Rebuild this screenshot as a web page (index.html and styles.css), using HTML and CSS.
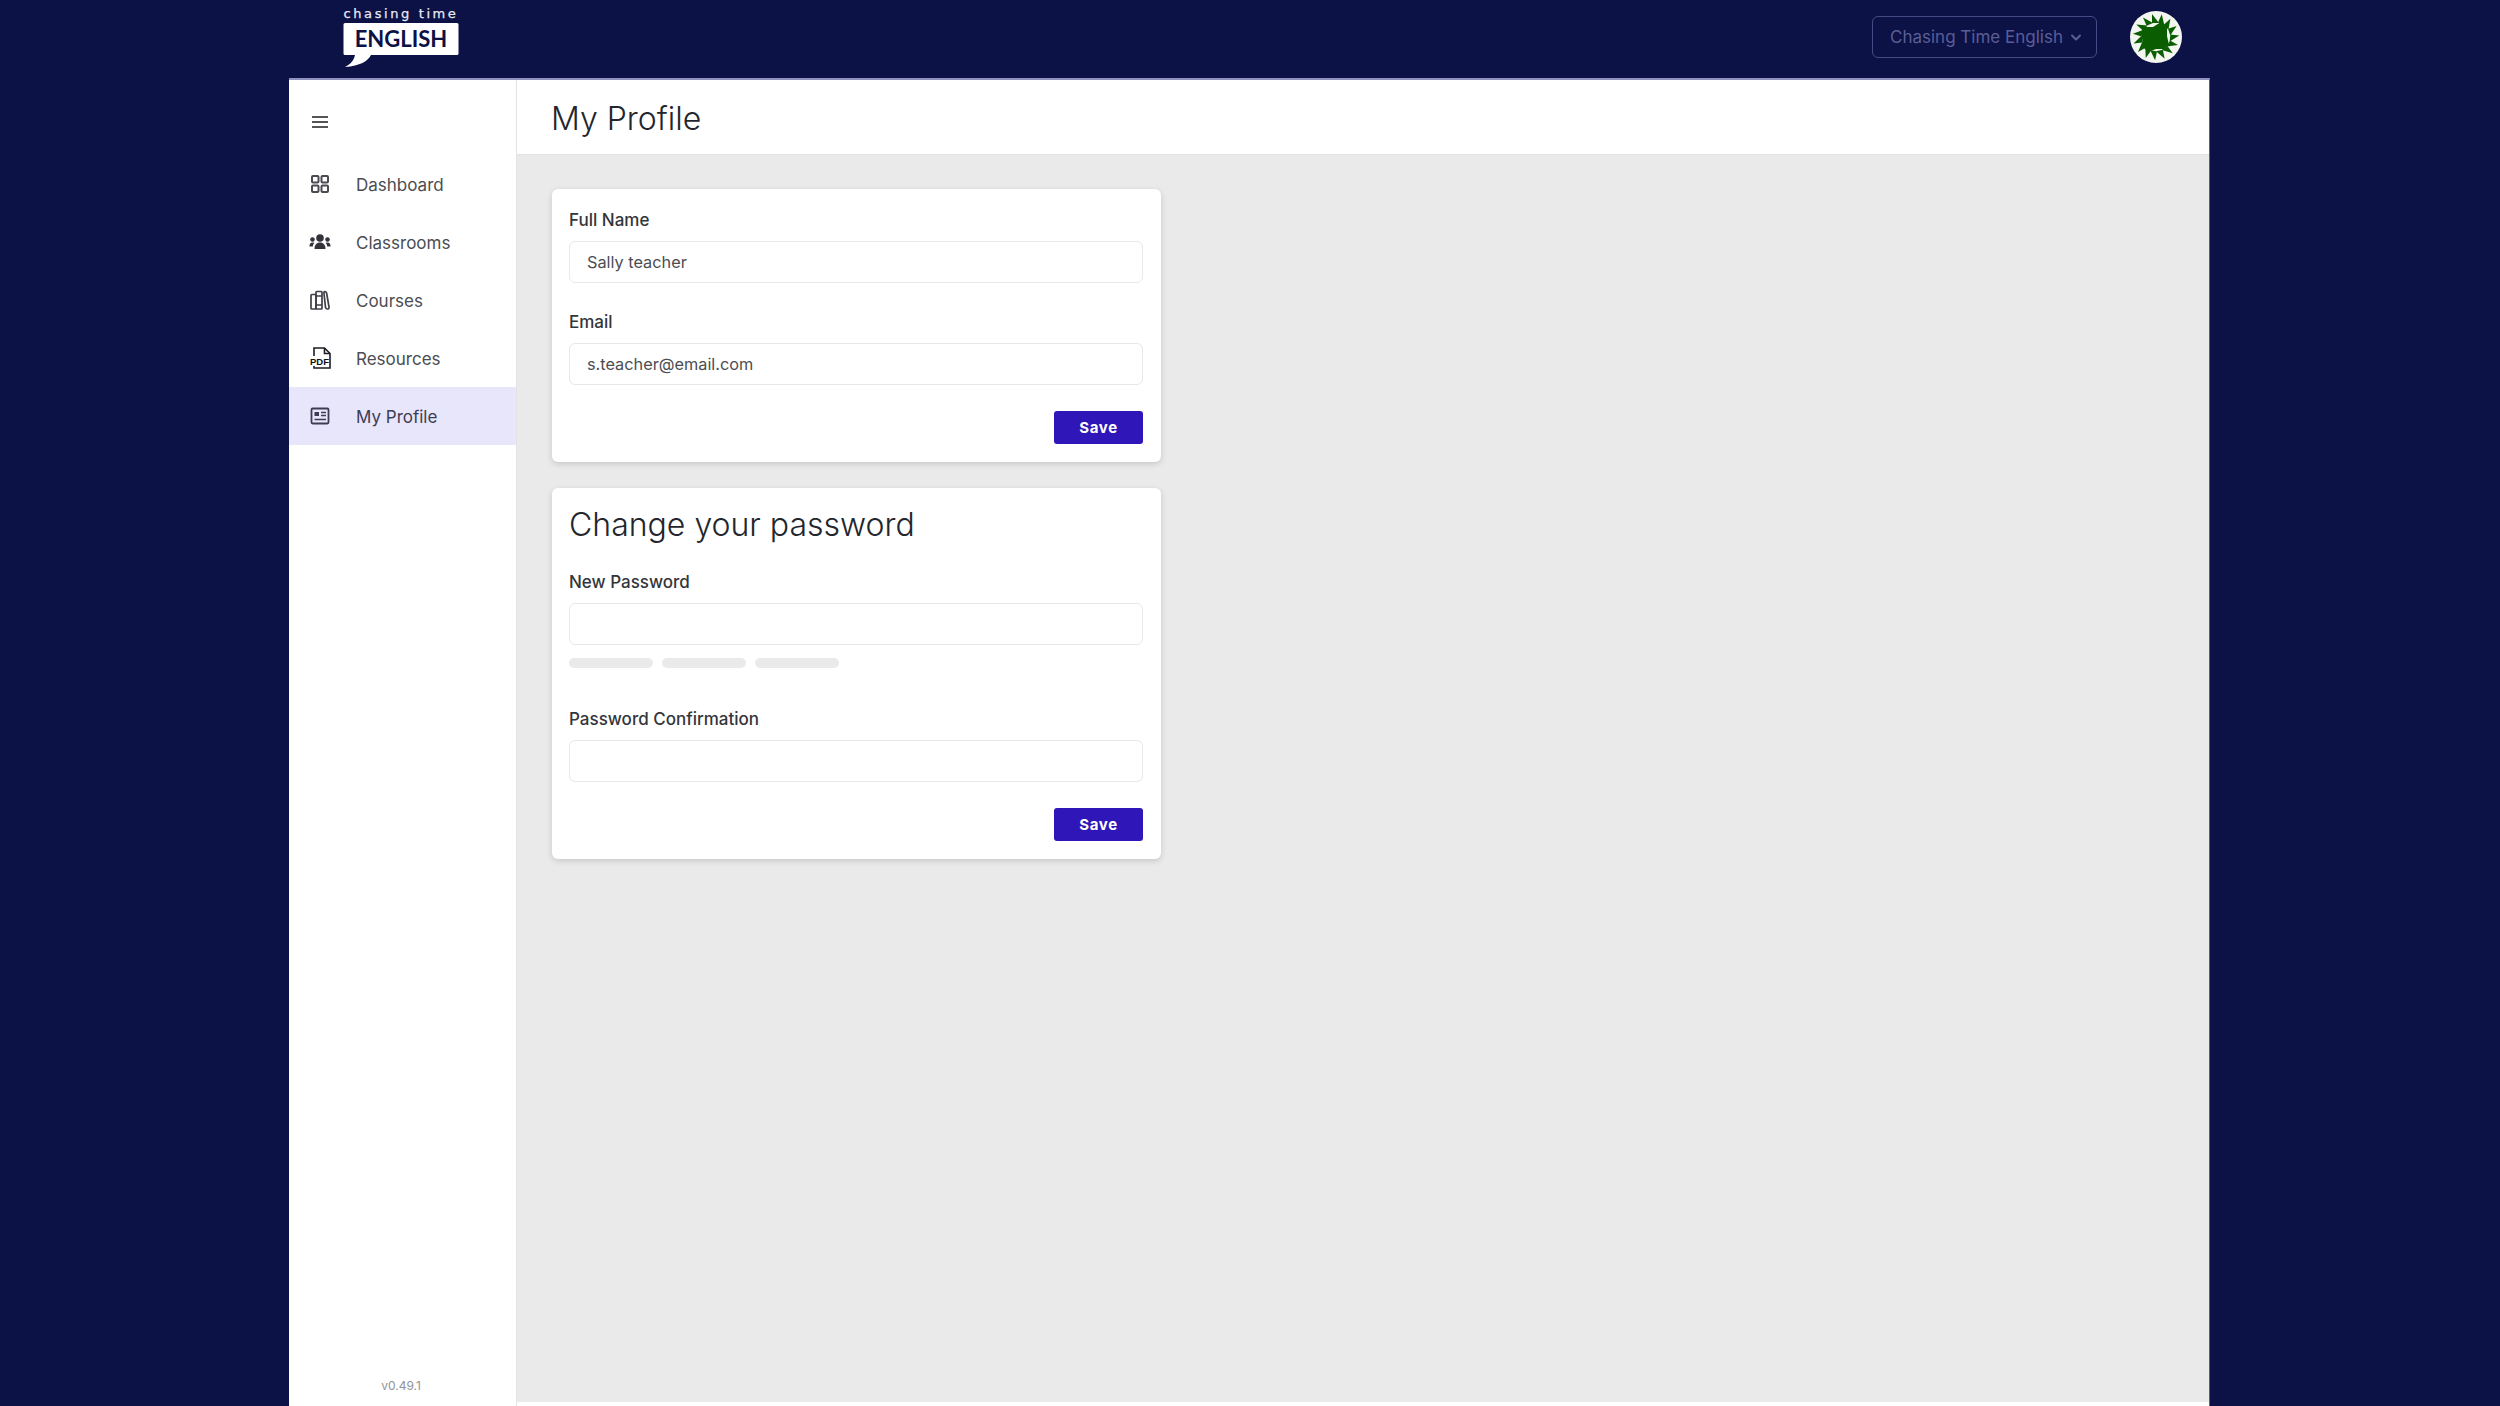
FILE: index.html
```html
<!DOCTYPE html>
<html lang="en">
<head>
  <meta charset="UTF-8" />
  <title>My Profile</title>
  <link rel="stylesheet" href="styles.css">
</head>
<body>
  <div class="shell">
    <header class="topbar">
      <svg class="logo" width="116" height="68" viewBox="0 0 116 68">
        <text class="logo-small" x="58" y="18" text-anchor="middle">chasing time</text>
        <path d="M2 23h112a1.500 1.500 0 0 1 1.500 1.500v29a1.500 1.500 0 0 1-1.500 1.500H28c-3 6-11 11-26 12 6-3 9-7 10-12H2a1.500 1.500 0 0 1-1.500-1.500v-29A1.500 1.500 0 0 1 2 23z" fill="#fff"/>
        <text class="logo-big" x="58" y="47" text-anchor="middle">ENGLISH</text>
      </svg>
      <div class="topbar-right">
        <div class="org-select">
          <span>Chasing Time English</span>
          <svg width="14" height="14" viewBox="0 0 14 14" fill="none" stroke="currentColor" stroke-width="2" stroke-linecap="round" stroke-linejoin="round"><path d="M3 5.500 7 9.500l4-4"/></svg>
        </div>
        <svg class="avatar" width="52" height="52" viewBox="0 0 52 52">
          <defs>
            <clipPath id="avatar-clip"><circle cx="26" cy="26" r="26"/></clipPath>
            <polygon id="tri" points="22,12 29,12 22,3" fill="#0b5d02"/>
          </defs>
          <g clip-path="url(#avatar-clip)">
            <rect width="52" height="52" fill="#f4f7f0"/>
            <use href="#tri" transform="rotate(0 26 26)"/>
            <use href="#tri" transform="rotate(24 26 26)"/>
            <use href="#tri" transform="rotate(48 26 26)"/>
            <use href="#tri" transform="rotate(72 26 26)"/>
            <use href="#tri" transform="rotate(96 26 26)"/>
            <use href="#tri" transform="rotate(120 26 26)"/>
            <use href="#tri" transform="rotate(144 26 26)"/>
            <use href="#tri" transform="rotate(168 26 26)"/>
            <use href="#tri" transform="rotate(192 26 26)"/>
            <use href="#tri" transform="rotate(216 26 26)"/>
            <use href="#tri" transform="rotate(240 26 26)"/>
            <use href="#tri" transform="rotate(264 26 26)"/>
            <use href="#tri" transform="rotate(288 26 26)"/>
            <use href="#tri" transform="rotate(312 26 26)"/>
            <use href="#tri" transform="rotate(336 26 26)"/>
            <polygon points="12,16 23,16 31,11 37,16 37,25 39,34 34,38 26,38 18,41 13,36 12,27" fill="#0b5d02"/>
          </g>
        </svg>
      </div>
    </header>

    <div class="frame">
      <aside class="sidebar">
        <div class="menu-toggle">
          <svg width="20" height="20" viewBox="0 0 20 20" fill="none" stroke="#555" stroke-width="2"><path d="M2 5h16M2 10h16M2 15h16"/></svg>
        </div>
        <nav class="nav">
          <a class="nav-item">
            <svg class="nav-icon" viewBox="0 0 20 20" fill="none" stroke="#4a4a52" stroke-width="2"><rect x="2" y="2" width="6.500" height="6.500" rx="1"/><rect x="11.500" y="2" width="6.500" height="6.500" rx="1"/><rect x="2" y="11.500" width="6.500" height="6.500" rx="1"/><rect x="11.500" y="11.500" width="6.500" height="6.500" rx="1"/></svg>
            <span>Dashboard</span>
          </a>
          <a class="nav-item">
            <svg class="nav-icon icon-wide" viewBox="0 0 22 20" fill="#33333b"><circle cx="11" cy="6" r="3.800"/><circle cx="3.500" cy="7.500" r="2.300"/><circle cx="18.500" cy="7.500" r="2.300"/><path d="M5.500 17c0-4 2-6.500 5.500-6.500s5.500 2.500 5.500 6.500z"/><path d="M0.500 14c0-2 1-3.500 3-3.500.7 0 1.300.1 1.800.4-.9 1-1.400 2-1.500 3.600H.5z"/><path d="M21.500 14c0-2-1-3.500-3-3.500-.7 0-1.300.1-1.800.4.900 1 1.400 2 1.500 3.600h3.300z"/></svg>
            <span>Classrooms</span>
          </a>
          <a class="nav-item">
            <svg class="nav-icon" viewBox="0 0 20 20" fill="none" stroke="#3f3f47" stroke-width="1.700" stroke-linejoin="round"><rect x="1" y="4.500" width="5" height="14.500" rx=".8"/><rect x="6" y="1.500" width="6" height="17.500" rx=".8"/><path d="M6 6h6M6 15h6"/><path d="M14.800 1.500c1 0 1.500.5 1.800 1.500l2.400 14c.2 1.200-.5 2-1.500 2s-1.700-.5-2-1.500l-1.500-14c-.1-1.200 0-2 .8-2z"/></svg>
            <span>Courses</span>
          </a>
          <a class="nav-item">
            <svg class="nav-icon icon-pdf" viewBox="0 0 21 22">
              <path d="M4 9V1h10.500l5.500 5.500V21H4v-2" fill="none" stroke="#1c1c22" stroke-width="1.600"/>
              <path d="M14.500 1v5.500H20" fill="none" stroke="#1c1c22" stroke-width="1.600"/>
              <rect x="0" y="9" width="18" height="10" fill="#fff"/>
              <text class="pdf-text" x="0" y="18">PDF</text>
            </svg>
            <span>Resources</span>
          </a>
          <a class="nav-item nav-item-active">
            <svg class="nav-icon" viewBox="0 0 20 20" fill="none" stroke="#3c3c55" stroke-width="1.800"><rect x="1.500" y="2.500" width="17" height="15" rx="1.200"/><rect x="4.500" y="6" width="4.500" height="4" fill="#3c3c55" stroke="none"/><path d="M11 6.500h5M11 9.500h5M4.500 13.500h11.500" stroke-width="1.500"/></svg>
            <span>My Profile</span>
          </a>
        </nav>
        <div class="version">v0.49.1</div>
      </aside>

      <main class="main">
        <div class="page-head">
          <h1>My Profile</h1>
        </div>
        <div class="content">
          <section class="card">
            <div class="field">
              <label>Full Name</label>
              <input class="input" type="text" value="Sally teacher">
            </div>
            <div class="field">
              <label>Email</label>
              <input class="input" type="text" value="s.teacher@email.com">
            </div>
            <div class="actions"><button class="btn">Save</button></div>
          </section>

          <section class="card">
            <h2>Change your password</h2>
            <div class="field">
              <label>New Password</label>
              <input class="input" type="password">
              <div class="strength">
                <span></span><span></span><span></span>
              </div>
            </div>
            <div class="field">
              <label>Password Confirmation</label>
              <input class="input" type="password">
            </div>
            <div class="actions"><button class="btn">Save</button></div>
          </section>
        </div>
      </main>
    </div>
  </div>
</body>
</html>
```

FILE: styles.css
```css
* {
  box-sizing: border-box;
}
html, body {
  height: 100%;
}
body {
  margin: 0;
  background: #0c1146;
  font-family: Inter, "Liberation Sans", sans-serif;
  color: #33363b;
  overflow: hidden;
}
.shell {
  width: 1921px;
  height: 1406px;
  margin-left: 289px;
  display: flex;
  flex-direction: column;
}
.topbar {
  height: 78px;
  flex-shrink: 0;
  display: flex;
  align-items: flex-start;
  justify-content: space-between;
  padding: 0 28px 0 54px;
}
.logo-small {
  font-family: "DejaVu Sans", sans-serif;
  font-size: 13px;
  font-weight: 400;
  letter-spacing: 2.600px;
  fill: #e8e9f2;
  stroke: #e8e9f2;
  stroke-width: 0.250px;
}
.logo-big {
  font-family: Lato, sans-serif;
  font-size: 22px;
  font-weight: 700;
  fill: #0c1146;
}
.topbar-right {
  display: flex;
  align-items: center;
  gap: 33px;
  height: 74px;
}
.org-select {
  width: 225px;
  height: 42px;
  display: flex;
  align-items: center;
  justify-content: space-between;
  padding: 0 13px 0 17px;
  border: 1px solid #454a85;
  border-radius: 6px;
  color: #5a5e96;
  font-size: 17px;
}
.frame {
  flex: 1;
  display: flex;
  min-height: 0;
  background: #fff;
  border-top: 2px solid #8f92c0;
  border-right: 1px solid #5a5d85;
}
.sidebar {
  width: 228px;
  flex-shrink: 0;
  display: flex;
  flex-direction: column;
  background: #fff;
  border-right: 1px solid #e4e4e4;
}
.menu-toggle {
  height: 75px;
  display: flex;
  align-items: center;
  padding: 8px 0 0 21px;
  flex-shrink: 0;
}
.nav {
  flex: 1;
}
.nav-item {
  height: 58px;
  display: flex;
  align-items: center;
  gap: 26px;
  padding-left: 21px;
  font-size: 17px;
  color: #4b4d52;
}
.nav-item span {
  padding-top: 1px;
}
.nav-item-active {
  background: #e8e6fb;
  color: #3c3c55;
}
.nav-icon {
  width: 20px;
  height: 20px;
  flex-shrink: 0;
}
.icon-wide {
  width: 22px;
  margin: 0 -1px;
}
.icon-pdf {
  width: 21px;
  height: 22px;
  margin-right: -1px;
}
.pdf-text {
  font-family: "Liberation Sans", sans-serif;
  font-weight: 700;
  font-size: 9.500px;
  fill: #111;
}
.version {
  height: 28px;
  text-align: center;
  font-size: 12px;
  color: #8f9399;
  padding-right: 3px;
}
.main {
  flex: 1;
  display: flex;
  flex-direction: column;
  min-width: 0;
  padding-bottom: 4px;
}
.page-head {
  height: 75px;
  flex-shrink: 0;
  display: flex;
  align-items: center;
  padding: 2px 0 0 34px;
  background: #fff;
  border-bottom: 1px solid #e2e2e2;
}
.page-head h1 {
  margin: 0;
  font-size: 32px;
  font-weight: 300;
  color: #23262c;
}
.content {
  flex: 1;
  background: #eaeaea;
  padding: 34px 0 0 35px;
  display: flex;
  flex-direction: column;
  gap: 26px;
}
.card {
  width: 609px;
  background: #fff;
  border-radius: 6px;
  padding: 20px 18px 18px 17px;
  box-shadow: 0 2px 6px rgba(0, 0, 0, 0.15);
}
.card h2 {
  margin: -2px 0 27px;
  font-size: 32px;
  font-weight: 300;
  line-height: 38px;
  color: #23262c;
}
.field {
  margin-bottom: 28px;
}
.field label {
  display: block;
  font-size: 17px;
  font-weight: 500;
  line-height: 22px;
  margin-bottom: 10px;
  color: #33363b;
}
.input {
  display: block;
  width: 100%;
  height: 42px;
  padding: 0 17px;
  border: 1px solid #e6e8eb;
  border-radius: 6px;
  background: #fff;
  font-family: Inter, sans-serif;
  font-size: 16.300px;
  color: #4b4d52;
  outline: none;
}
.strength {
  display: flex;
  gap: 9px;
  margin: 13px 0 40px;
}
.strength span {
  width: 84px;
  height: 10px;
  border-radius: 5px;
  background: #eaeaea;
}
.actions {
  display: flex;
  justify-content: flex-end;
  margin-top: -2px;
}
.btn {
  width: 89px;
  height: 33px;
  border: none;
  border-radius: 3px;
  background: #2e16b8;
  color: #fff;
  font-family: Inter, sans-serif;
  font-size: 15px;
  font-weight: 700;
  letter-spacing: 0.600px;
}
```
